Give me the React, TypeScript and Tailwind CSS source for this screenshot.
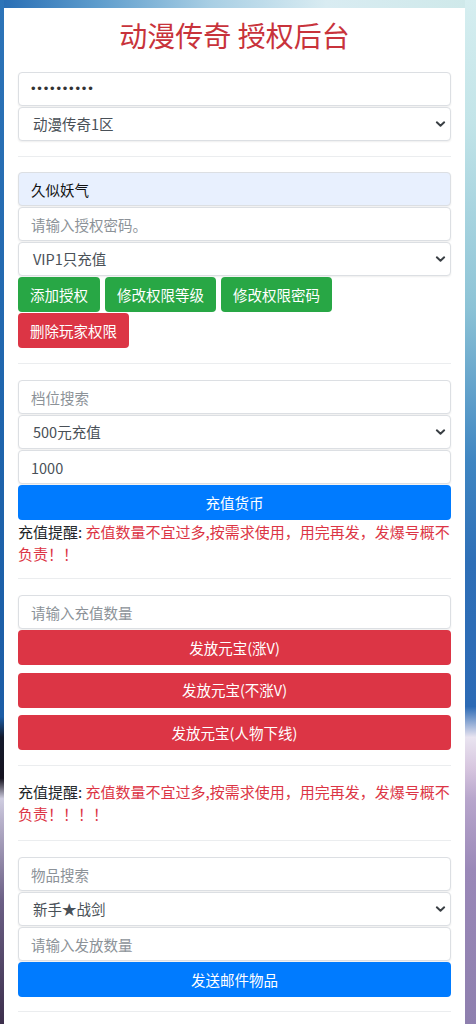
import React from "react";

const inputCls =
  "block w-full h-[34px] mb-px rounded-[4px] border border-[#dcdfe3] bg-white px-[12px] text-[14.5px] text-[#495057] placeholder:text-[#8c9298] outline-none shadow-[0_1px_2px_rgba(0,0,0,0.07)]";

function Input({ placeholder, value, autofill = false }: { placeholder?: string; value?: string; autofill?: boolean }) {
  return (
    <input
      type="text"
      readOnly
      placeholder={placeholder}
      defaultValue={value}
      className={
        autofill
          ? "block w-full h-[34px] mb-px rounded-[4px] border border-[#dcdfe3] bg-[#e8f0fe] px-[12px] text-[14.5px] text-[#111] outline-none shadow-[0_1px_2px_rgba(0,0,0,0.07)]"
          : inputCls
      }
    />
  );
}

function Password() {
  return (
    <div className="flex items-center w-full h-[34px] mb-px rounded-[4px] border border-[#dcdfe3] bg-white px-[12px] shadow-[0_1px_2px_rgba(0,0,0,0.07)]">
      <span className="font-['Liberation_Sans',sans-serif] text-[13px] tracking-[1.8px] text-[#333]">••••••••••</span>
    </div>
  );
}

function Select({ label }: { label: string }) {
  return (
    <div className="flex items-center justify-between w-full h-[34px] mb-px rounded-[4px] border border-[#dcdfe3] bg-white pl-[14px] pr-[4px] text-[14.5px] text-[#495057] shadow-[0_1px_2px_rgba(0,0,0,0.07)]">
      <span>{label}</span>
      <svg width="11" height="8" viewBox="0 0 16 12" fill="none">
        <path d="M2.5 3.5l5.5 5 5.5-5" stroke="#3a3f44" strokeWidth="3" strokeLinecap="round" strokeLinejoin="round" />
      </svg>
    </div>
  );
}

function Hr({ className }: { className: string }) {
  return <div className={"h-px bg-[#ebedef] " + className} />;
}

function Notice({ tail }: { tail: string }) {
  return (
    <div className="text-[15px] leading-[22px] text-[#212529]">
      <div>
        <span>充值提醒: </span>
        <span className="text-[#dc3545]">充值数量不宜过多,按需求使用，用完再发，发爆号概不</span>
      </div>
      <div className="text-[#dc3545]">负责{tail}</div>
    </div>
  );
}

const greenBtn = "h-[35px] px-[12px] rounded-[4px] bg-[#28a745] text-white text-[14.5px]";

export default function App() {
  return (
    <div className="flex h-[1024px] w-[476px] overflow-hidden font-['Noto_Sans_CJK_SC','Noto_Sans',sans-serif]">
      <div className="w-[4px] shrink-0 bg-[linear-gradient(180deg,#2d74b8_0%,#1f65ad_40%,#1c5da6_70%,#141a2c_72%,#15131f_76%,#cfcde0_78%,#b9b3cc_80%,#6b5f85_88%,#3c2f4c_100%)]" />
      <div className="flex flex-col w-[461px] shrink-0">
        <div className="h-[8px] shrink-0 bg-[linear-gradient(90deg,#2a6fb5_0%,#5d9ccc_20%,#a9cfe4_45%,#d9ecf2_70%,#cfe9ea_100%)]" />
        <div className="flex-1 bg-white rounded-t-[10px] px-[14px] pt-[10px]">
          <h1 className="text-center text-[28px] leading-[34px] text-[#c8333b] font-normal">动漫传奇 授权后台</h1>
          <div className="mt-[20px]">
            <Password />
            <Select label="动漫传奇1区" />
          </div>
          <Hr className="mt-[15px] mb-[15px]" />
          <Input value="久似妖气" autofill />
          <Input placeholder="请输入授权密码。" />
          <Select label="VIP1只充值" />
          <div className="flex gap-[5px]">
            <button className={greenBtn}>添加授权</button>
            <button className={greenBtn}>修改权限等级</button>
            <button className={greenBtn}>修改权限密码</button>
          </div>
          <div className="mt-px flex">
            <button className="h-[35px] px-[12px] rounded-[4px] bg-[#dc3545] text-white text-[14.5px]">删除玩家权限</button>
          </div>
          <Hr className="mt-[15px] mb-[16px]" />
          <Input placeholder="档位搜索" />
          <Select label="500元充值" />
          <Input value="1000" />
          <button className="block w-full h-[35px] rounded-[4px] bg-[#007bff] text-white text-[14.5px]">充值货币</button>
          <div className="mt-px">
            <Notice tail="！！" />
          </div>
          <Hr className="mt-[13px] mb-[16px]" />
          <Input placeholder="请输入充值数量" />
          <button className="block w-full h-[35px] rounded-[4px] bg-[#dc3545] text-white text-[14.5px]">发放元宝(涨V)</button>
          <button className="mt-[7.5px] block w-full h-[35px] rounded-[4px] bg-[#dc3545] text-white text-[14.5px]">发放元宝(不涨V)</button>
          <button className="mt-[7.5px] block w-full h-[35px] rounded-[4px] bg-[#dc3545] text-white text-[14.5px]">发放元宝(人物下线)</button>
          <Hr className="mt-[15px] mb-[15px]" />
          <Notice tail="！！！！" />
          <Hr className="mt-[15px] mb-[16px]" />
          <Input placeholder="物品搜索" />
          <Select label="新手★战剑" />
          <Input placeholder="请输入发放数量" />
          <button className="block w-full h-[35px] rounded-[4px] bg-[#007bff] text-white text-[14.5px]">发送邮件物品</button>
          <Hr className="mt-[14px] mb-[16px]" />
        </div>
      </div>
      <div className="w-[11px] shrink-0 bg-[linear-gradient(180deg,#d6eef0_0%,#c2e4e8_12%,#8cc3d6_30%,#3f86c2_45%,#2e6fb7_55%,#2c6ab5_69%,#e9e4f0_72%,#d7c6df_75%,#b8a6cc_78%,#9a88b8_85%,#8e7fae_100%)]" />
    </div>
  );
}
